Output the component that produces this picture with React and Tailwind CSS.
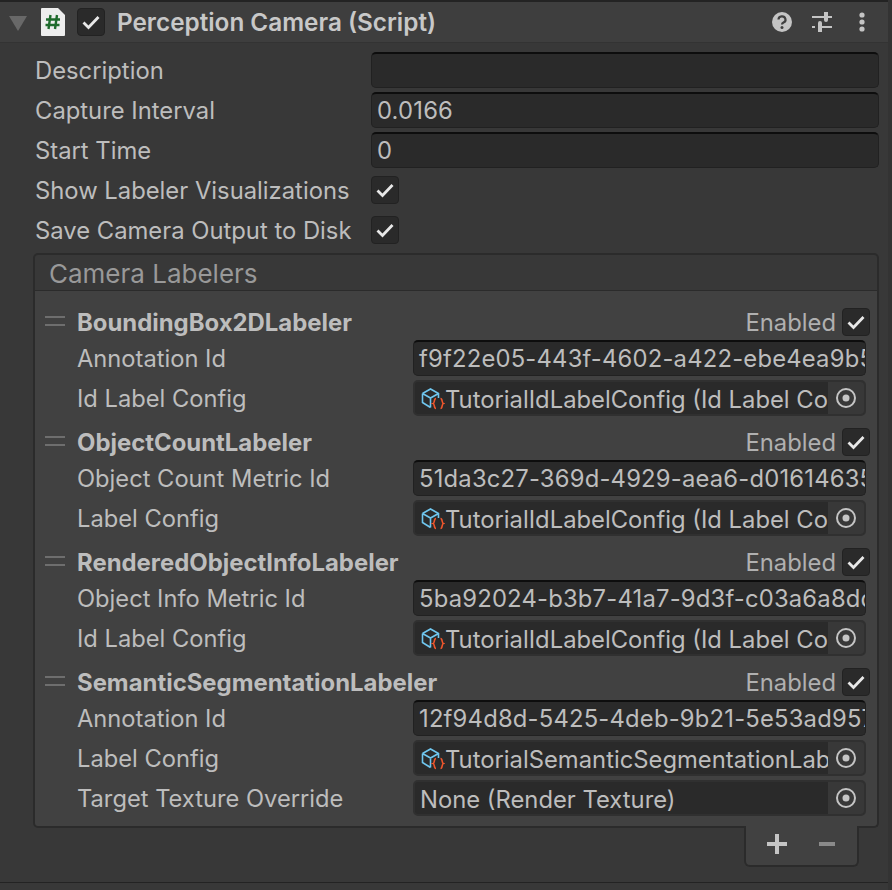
import React from 'react'

const LABELERS = [
  {
    name: 'BoundingBox2DLabeler',
    fields: [
      { label: 'Annotation Id', text: 'f9f22e05-443f-4602-a422-ebe4ea9b55cb' },
      { label: 'Id Label Config', asset: 'TutorialIdLabelConfig (Id Label Config)' },
    ],
  },
  {
    name: 'ObjectCountLabeler',
    fields: [
      { label: 'Object Count Metric Id', text: '51da3c27-369d-4929-aea6-d01614635ce2' },
      { label: 'Label Config', asset: 'TutorialIdLabelConfig (Id Label Config)' },
    ],
  },
  {
    name: 'RenderedObjectInfoLabeler',
    fields: [
      { label: 'Object Info Metric Id', text: '5ba92024-b3b7-41a7-9d3f-c03a6a8ddd01' },
      { label: 'Id Label Config', asset: 'TutorialIdLabelConfig (Id Label Config)' },
    ],
  },
  {
    name: 'SemanticSegmentationLabeler',
    fields: [
      { label: 'Annotation Id', text: '12f94d8d-5425-4deb-9b21-5e53ad957d66' },
      { label: 'Label Config', asset: 'TutorialSemanticSegmentationLabelConfig' },
      { label: 'Target Texture Override', none: 'None (Render Texture)' },
    ],
  },
]

function Check({ className = '' }) {
  return (
    <div className={`w-7 h-7 flex items-center justify-center rounded-[4px] bg-[#2a2a2a] border border-[#222222] ${className}`}>
      <svg width="20" height="16" viewBox="0 0 20 16" fill="none">
        <path d="M2.5 8.5 L7.5 13.5 L17.5 3" stroke="#e8e8e8" strokeWidth="2.8" />
      </svg>
    </div>
  )
}

function TextField({ children }) {
  return (
    <div className="flex-1 h-9 min-w-0 flex items-center rounded-[5px] bg-[#2a2a2a] border border-[#212121] border-t-2 border-t-[#0d0d0d] px-[5px] overflow-hidden whitespace-nowrap text-[#bdbdbd] tracking-[0.2px]">
      <span className="pt-[1px]">{children}</span>
    </div>
  )
}

function AssetIcon() {
  return (
    <svg width="24" height="26" viewBox="0 0 24 26" fill="none" className="shrink-0 ml-[1px]">
      <path d="M1.5 8.5 L9.5 4 L17.5 8.5 V13 M1.5 8.5 V17.5 L9.5 22.5 M1.5 8.5 L9.5 13 L17.5 8.5 M9.5 13 V22.5" stroke="#6fc6ee" strokeWidth="1.6" />
      <path d="M15 13.5 C12.8 13.5 13.8 18 12.2 18.5 C13.8 19 12.8 23.5 15 23.5 M19.5 13.5 C21.7 13.5 20.7 18 22.3 18.5 C20.7 19 21.7 23.5 19.5 23.5" stroke="#f0562c" strokeWidth="1.6" />
    </svg>
  )
}

function Target() {
  return (
    <div className="w-9 h-full shrink-0 flex items-center justify-center bg-[#383838]">
      <svg width="22" height="22" viewBox="0 0 22 22" fill="none">
        <circle cx="11" cy="11" r="9" stroke="#c4c4c4" strokeWidth="2" />
        <circle cx="11" cy="11" r="3.5" fill="#c4c4c4" />
      </svg>
    </div>
  )
}

function ObjectField({ asset, none }) {
  return (
    <div className="flex-1 h-9 min-w-0 flex items-center rounded-[5px] bg-[#2a2a2a] border-2 border-[#303030] overflow-hidden whitespace-nowrap text-[#bdbdbd]">
      <div className="flex-1 min-w-0 h-full flex items-center overflow-hidden pl-[5px]">
        {asset ? <AssetIcon /> : null}
        <span className="pt-[3px]">{asset || none}</span>
      </div>
      <Target />
    </div>
  )
}

function Labeler({ labeler }) {
  return (
    <div className="flex flex-col gap-1">
      <div className="h-7 flex items-center pl-[10px] pr-[7px]">
        <div className="w-5 h-[10px] mr-[12px] -mt-[2px] border-y-2 border-[#6e6e6e]" />
        <span className="pt-[1px] font-bold text-[23.9px] text-[#bdbdbd]">{labeler.name}</span>
        <span className="pt-[2px] ml-auto mr-[6px] text-[#b0b0b0]">Enabled</span>
        <Check />
      </div>
      {labeler.fields.map((f) => (
        <div key={f.label} className="h-9 flex items-center pl-[42px] pr-[11px]">
          <span className="w-[336px] shrink-0 pt-[2px] text-[23.7px] text-[#bdbdbd]">{f.label}</span>
          {f.text ? <TextField>{f.text}</TextField> : <ObjectField asset={f.asset} none={f.none} />}
        </div>
      ))}
    </div>
  )
}

function PropRow({ label, children }) {
  return (
    <div className="h-9 flex items-center">
      <span className="w-[336px] shrink-0 pt-[2px] text-[#bdbdbd]">{label}</span>
      {children}
    </div>
  )
}

export default function App() {
  return (
    <div className="w-[892px] h-[890px] flex bg-[#383838] font-['Inter',sans-serif] text-[23.8px] leading-none overflow-hidden">
      <div className="w-[888px] h-full flex flex-col shrink-0">
        <div className="h-[2px] bg-[#232323]" />

        {/* Component header */}
        <div className="h-[41px] shrink-0 flex items-center bg-[#3e3e3e] border-b border-[#333333]">
          <svg width="18" height="15" viewBox="0 0 18 15" className="ml-[9px] mt-[2px]">
            <path d="M0 0 H18 L9 15 Z" fill="#686868" />
          </svg>
          <svg width="24" height="28" viewBox="0 0 24 28" className="ml-[14px]">
            <path d="M1 0 H17 L24 7 V27 A1 1 0 0 1 23 28 H1 A1 1 0 0 1 0 27 V1 A1 1 0 0 1 1 0 Z" fill="#eeeeee" />
            <path d="M9.5 7 L7.5 21 M16 7 L14 21 M5 11.5 H19 M4.5 17 H18.5" stroke="#1f6b2d" strokeWidth="2.4" />
          </svg>
          <Check className="ml-3" />
          <span className="ml-3 pt-[1px] font-semibold text-[24.3px] text-[#c8c8c8]">Perception Camera (Script)</span>
          <svg width="20" height="20" viewBox="0 0 20 20" className="ml-auto">
            <circle cx="10" cy="10" r="10" fill="#c4c4c4" />
            <path d="M6.5 7.5 A3.5 3.2 0 1 1 11.5 10.5 C10.5 11 10 11.5 10 12.5" stroke="#3e3e3e" strokeWidth="2.2" fill="none" />
            <circle cx="10" cy="15.5" r="1.5" fill="#3e3e3e" />
          </svg>
          <svg width="20" height="20" viewBox="0 0 20 20" className="ml-5">
            <path d="M0 5 H20 M0 15 H3 M8 15 H20" stroke="#c4c4c4" strokeWidth="2" />
            <path d="M14 0 V8 M8 11 V20" stroke="#c4c4c4" strokeWidth="4" strokeLinecap="round" />
          </svg>
          <svg width="6" height="20" viewBox="0 0 6 20" className="ml-[27px] mr-[23px]">
            <circle cx="3" cy="3" r="2.6" fill="#c4c4c4" />
            <circle cx="3" cy="10" r="2.6" fill="#c4c4c4" />
            <circle cx="3" cy="17" r="2.6" fill="#c4c4c4" />
          </svg>
        </div>

        {/* Properties */}
        <div className="flex-1 flex flex-col pl-[35px] pr-[9px] pt-[9px]">
          <div className="flex flex-col gap-1">
            <PropRow label="Description"><TextField /></PropRow>
            <PropRow label="Capture Interval"><TextField>0.0166</TextField></PropRow>
            <PropRow label="Start Time"><TextField>0</TextField></PropRow>
            <PropRow label="Show Labeler Visualizations"><Check className="mt-[-1px]" /></PropRow>
            <PropRow label="Save Camera Output to Disk"><Check className="mt-[-1px]" /></PropRow>
          </div>

          {/* Camera Labelers list */}
          <div className="mt-[5px] -ml-[2px] flex flex-col">
            <div className="h-[39px] flex items-center pl-[14px] pt-[2px] rounded-t-[5px] border-2 border-[#2b2b2b] text-[26px] text-[#999999]">
              Camera Labelers
            </div>
            <div className="h-[537px] -mt-[1px] flex flex-col gap-3 pt-[17px] bg-[#414141] border-2 border-t-0 border-[#2b2b2b] rounded-b-[5px]">
              {LABELERS.map((l) => <Labeler key={l.name} labeler={l} />)}
            </div>
            <div className="self-end w-[115px] h-[41px] -mt-[2px] mr-5 flex items-center justify-between pl-[21px] pr-[22px] pb-[3px] bg-[#414141] border-2 border-t-0 border-[#2b2b2b] rounded-b-[6px]">
              <svg width="20" height="20" viewBox="0 0 20 20">
                <path d="M10 0 V20 M0 10 H20" stroke="#c4c4c4" strokeWidth="4" />
              </svg>
              <svg width="16" height="4" viewBox="0 0 16 4">
                <path d="M0 2 H16" stroke="#8a8a8a" strokeWidth="4" />
              </svg>
            </div>
          </div>
        </div>

        <div className="h-[1px] bg-[#232323]" />
        <div className="h-[7px]" />
      </div>
      <div className="flex-1 bg-[#333333]" />
    </div>
  )
}
